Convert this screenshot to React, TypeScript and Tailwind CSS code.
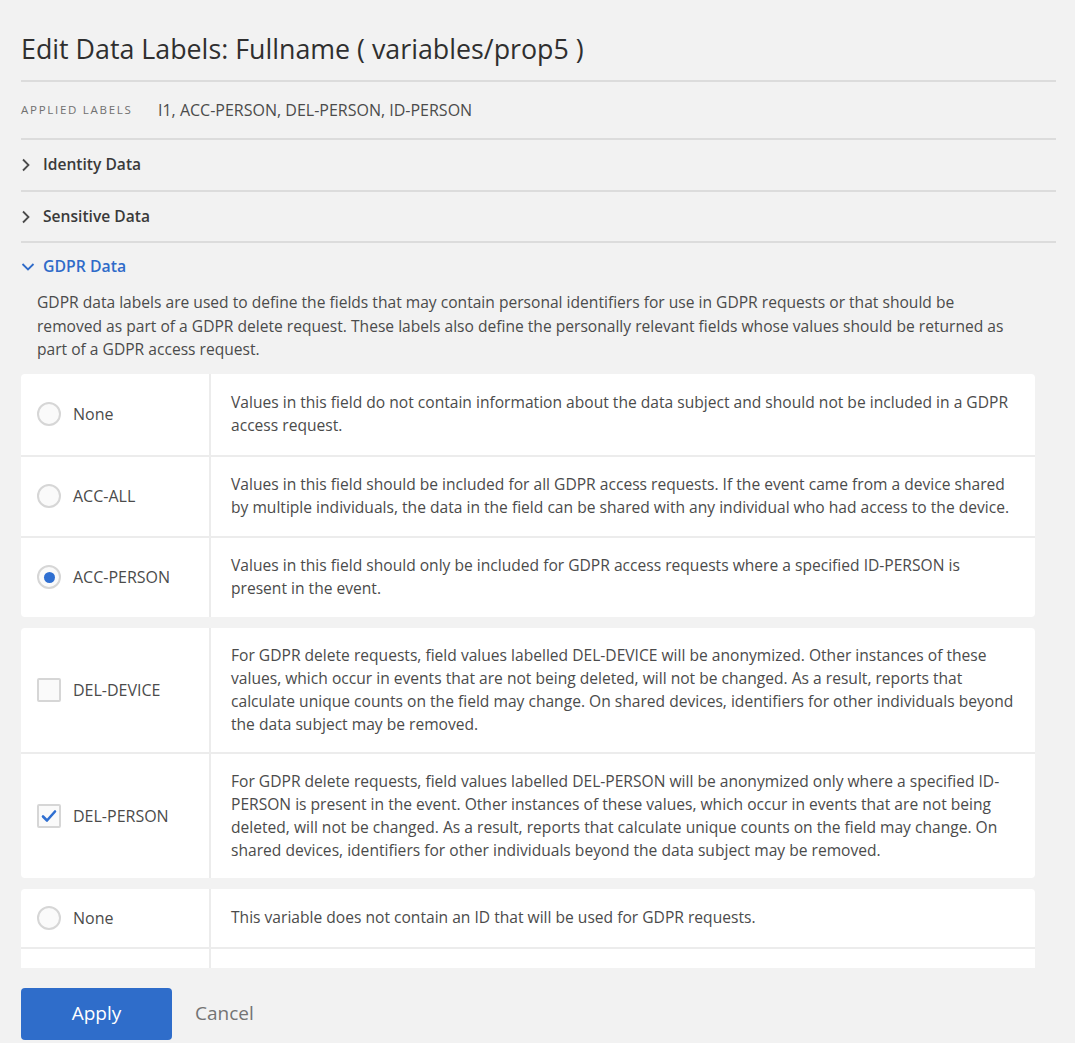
import React from "react";

const font = { fontFamily: "'Open Sans', 'Noto Sans', sans-serif" };

function Radio({ checked }: { checked?: boolean }) {
  return (
    <span className="flex h-[24px] w-[24px] shrink-0 items-center justify-center rounded-full border-2 border-[#d6d6d6] bg-[#fafafa]">
      {checked && <span className="h-[11px] w-[11px] rounded-full bg-[#2f6fd1]" />}
    </span>
  );
}

function Check({ checked }: { checked?: boolean }) {
  return (
    <span className="flex h-[24px] w-[24px] shrink-0 items-center justify-center rounded-[2px] border-2 border-[#d6d6d6] bg-[#fafafa]">
      {checked && (
        <svg width="16" height="14" viewBox="0 0 16 14">
          <path d="M2 7.5 L6 11.5 L14 2.5" fill="none" stroke="#2f6fd1" strokeWidth="2.6" strokeLinecap="round" strokeLinejoin="round" />
        </svg>
      )}
    </span>
  );
}

type Row = { kind?: "radio" | "check"; checked?: boolean; label?: string; lines: string[]; h: string };

function Table({ rows }: { rows: Row[] }) {
  return (
    <div className="mr-[21px] shrink-0 overflow-hidden rounded-[4px] bg-white">
      {rows.map((r, i) => (
        <div key={i} className={`flex ${r.h} ${i > 0 ? "border-t-2 border-[#ececec]" : ""}`}>
          <div className="flex w-[190px] shrink-0 items-center gap-[12px] border-r-2 border-[#ececec] pl-[16px]">
            {r.kind === "radio" && <Radio checked={r.checked} />}
            {r.kind === "check" && <Check checked={r.checked} />}
            {r.label && <span className="text-[16px] text-[#4b4b4b]">{r.label}</span>}
          </div>
          <div className="flex min-w-0 flex-1 items-center pl-[20px]">
            <div className="text-[15.6px] leading-[23px] text-[#4b4b4b]">
              {r.lines.map((l, j) => (
                <div key={j} className="whitespace-nowrap">
                  {l}
                </div>
              ))}
            </div>
          </div>
        </div>
      ))}
    </div>
  );
}

function ChevronRight() {
  return (
    <svg width="10" height="14" viewBox="0 0 10 14">
      <path d="M2 1.5 L7.5 7 L2 12.5" fill="none" stroke="#4b4b4b" strokeWidth="1.8" />
    </svg>
  );
}

function ChevronDown() {
  return (
    <svg width="14" height="10" viewBox="0 0 14 10">
      <path d="M1.5 2 L7 7.5 L12.5 2" fill="none" stroke="#2f6bc9" strokeWidth="1.8" />
    </svg>
  );
}

export default function App() {
  return (
    <div className="h-[1043px] w-[1075px] overflow-hidden bg-[#f2f2f2] pl-[21px] pr-[19px]" style={font}>
      <h1 className="pt-[33px] text-[26.8px] leading-[32px] text-[#2f2f2f]">
        Edit Data Labels: Fullname ( variables/prop5 )
      </h1>
      <div className="mt-[15px] border-b-2 border-[#dcdcdc]" />
      <div className="flex h-[56px] items-center">
        <span className="w-[137px] text-[11.5px] tracking-[0.15em] text-[#707070]">APPLIED LABELS</span>
        <span className="text-[16px] text-[#4b4b4b]">I1, ACC-PERSON, DEL-PERSON, ID-PERSON</span>
      </div>
      <div className="border-b-2 border-[#dcdcdc]" />
      <div className="flex h-[50px] items-center gap-[12px]">
        <ChevronRight />
        <span className="text-[15.6px] font-semibold text-[#3a3a3a]">Identity Data</span>
      </div>
      <div className="border-b-2 border-[#dcdcdc]" />
      <div className="flex h-[49px] items-center gap-[12px]">
        <ChevronRight />
        <span className="text-[15.6px] font-semibold text-[#3a3a3a]">Sensitive Data</span>
      </div>
      <div className="border-b-2 border-[#dcdcdc]" />
      <div className="flex h-[48px] items-center gap-[8px]">
        <ChevronDown />
        <span className="text-[15.8px] font-semibold text-[#2f6bc9]">GDPR Data</span>
      </div>
      <div className="pl-[16px] text-[15.6px] leading-[23.5px] text-[#4b4b4b]">
        <div className="whitespace-nowrap">
          GDPR data labels are used to define the fields that may contain personal identifiers for use in GDPR requests or that should be
        </div>
        <div className="whitespace-nowrap">
          removed as part of a GDPR delete request. These labels also define the personally relevant fields whose values should be returned as
        </div>
        <div className="whitespace-nowrap">part of a GDPR access request.</div>
      </div>
      <div className="mt-[12px] flex h-[594px] flex-col gap-[11px] overflow-hidden">
        <Table
          rows={[
            {
              kind: "radio",
              label: "None",
              h: "h-[81px]",
              lines: [
                "Values in this field do not contain information about the data subject and should not be included in a GDPR",
                "access request.",
              ],
            },
            {
              kind: "radio",
              label: "ACC-ALL",
              h: "h-[81px]",
              lines: [
                "Values in this field should be included for all GDPR access requests. If the event came from a device shared",
                "by multiple individuals, the data in the field can be shared with any individual who had access to the device.",
              ],
            },
            {
              kind: "radio",
              checked: true,
              label: "ACC-PERSON",
              h: "h-[81px]",
              lines: [
                "Values in this field should only be included for GDPR access requests where a specified ID-PERSON is",
                "present in the event.",
              ],
            },
          ]}
        />
        <Table
          rows={[
            {
              kind: "check",
              label: "DEL-DEVICE",
              h: "h-[124px]",
              lines: [
                "For GDPR delete requests, field values labelled DEL-DEVICE will be anonymized. Other instances of these",
                "values, which occur in events that are not being deleted, will not be changed. As a result, reports that",
                "calculate unique counts on the field may change. On shared devices, identifiers for other individuals beyond",
                "the data subject may be removed.",
              ],
            },
            {
              kind: "check",
              checked: true,
              label: "DEL-PERSON",
              h: "h-[126px]",
              lines: [
                "For GDPR delete requests, field values labelled DEL-PERSON will be anonymized only where a specified ID-",
                "PERSON is present in the event. Other instances of these values, which occur in events that are not being",
                "deleted, will not be changed. As a result, reports that calculate unique counts on the field may change. On",
                "shared devices, identifiers for other individuals beyond the data subject may be removed.",
              ],
            },
          ]}
        />
        <Table
          rows={[
            {
              kind: "radio",
              label: "None",
              h: "h-[58px]",
              lines: ["This variable does not contain an ID that will be used for GDPR requests."],
            },
            {
              h: "h-[81px]",
              lines: [],
            },
          ]}
        />
      </div>
      <div className="mt-[20px] flex items-center gap-[23px]">
        <button className="h-[52px] w-[151px] rounded-[4px] bg-[#2f6dca] text-[19px] text-white">Apply</button>
        <span className="text-[19px] text-[#747474]">Cancel</span>
      </div>
    </div>
  );
}
